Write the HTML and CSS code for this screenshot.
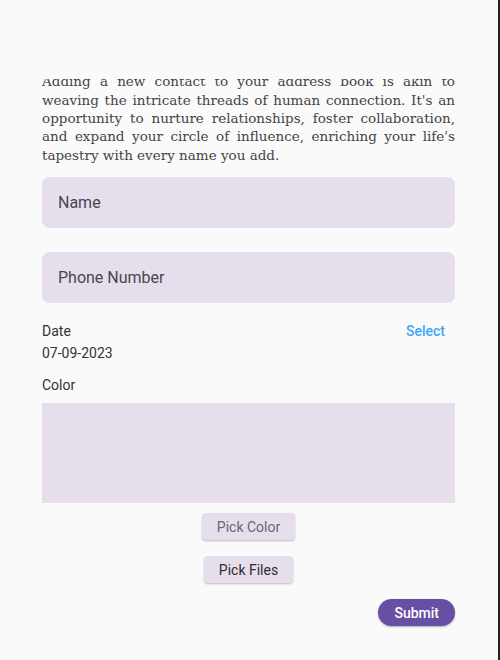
FILE: index.html
```html
<!DOCTYPE html>
<html lang="en">
<head>
<meta charset="utf-8">
<title>Add Contact</title>
<link rel="stylesheet" href="styles.css">
</head>
<body>
<div class="screen">
  <main class="scroll">
    <p class="intro">Adding a new contact to your address book is akin to weaving the intricate threads of human connection. It's an opportunity to nurture relationships, foster collaboration, and expand your circle of influence, enriching your life's tapestry with every name you add.</p>
    <div class="field field-first">Name</div>
    <div class="field field-next">Phone Number</div>
    <div class="date-row">
      <div class="date-info">
        <div class="label">Date</div>
        <div class="value">07-09-2023</div>
      </div>
      <button class="text-btn">Select</button>
    </div>
    <div class="label color-label">Color</div>
    <div class="color-box"></div>
    <div class="actions">
      <button class="pick-btn pick-color">Pick Color</button>
      <button class="pick-btn pick-files">Pick Files</button>
    </div>
    <div class="submit-row">
      <button class="submit">Submit</button>
    </div>
  </main>
</div>
</body>
</html>
```
FILE: styles.css
```css
* { box-sizing: border-box; }
html, body { margin: 0; padding: 0; }
body {
  background: #fafafa;
  font-family: Roboto, "Liberation Sans", sans-serif;
}
.screen {
  width: 500px;
  height: 660px;
  background: #fafafa;
  border-right: 2px solid #222;
  padding-top: 79px;
  overflow: hidden;
}
.scroll {
  height: 581px;
  overflow: hidden;
  padding: 0 43px 0 42px;
  display: flex;
  flex-direction: column;
}
.intro {
  margin: -6.9px 0 0;
  font-family: "DejaVu Serif", "Liberation Serif", serif;
  font-size: 13.5px;
  line-height: 18.4px;
  color: #444;
  text-align: justify;
}
.field {
  height: 51px;
  border-radius: 8px;
  background: #e6dfeb;
  display: flex;
  align-items: center;
  padding-left: 16px;
  font-size: 16px;
  color: #49454f;
}
.field-first { margin-top: 12.7px; }
.field-next { margin-top: 24px; }
.date-row {
  margin-top: 18.5px;
  display: flex;
  justify-content: space-between;
  align-items: flex-start;
}
.label, .value {
  font-size: 14px;
  line-height: 20px;
  color: #333;
}
.value { margin-top: 1.5px; }
.text-btn {
  border: none;
  background: transparent;
  font-family: Roboto, "Liberation Sans", sans-serif;
  font-size: 14px;
  font-weight: 500;
  line-height: 20px;
  color: #42a5f5;
  padding: 0 10px;
}
.color-label { margin-top: 11.7px; }
.color-box {
  margin-top: 8.5px;
  height: 100px;
  background: #e6dfeb;
}
.actions {
  margin-top: 10px;
  display: flex;
  flex-direction: column;
  align-items: center;
  gap: 16px;
}
.pick-btn {
  height: 27px;
  padding: 0 15px;
  border: none;
  border-radius: 4px;
  background: #e6dfeb;
  font-family: Roboto, "Liberation Sans", sans-serif;
  font-size: 14px;
  box-shadow: 0 1px 2px rgba(0,0,0,0.25);
}
.pick-color { color: #6a6670; }
.pick-files { color: #2e2b33; }
.submit-row {
  margin-top: 16px;
  display: flex;
  justify-content: flex-end;
}
.submit {
  height: 27px;
  padding: 0 16px;
  border: none;
  border-radius: 14px;
  background: #6750a4;
  color: #fff;
  font-family: Roboto, "Liberation Sans", sans-serif;
  font-size: 14px;
  font-weight: 500;
  box-shadow: 0 1px 2px rgba(0,0,0,0.3);
}
```
